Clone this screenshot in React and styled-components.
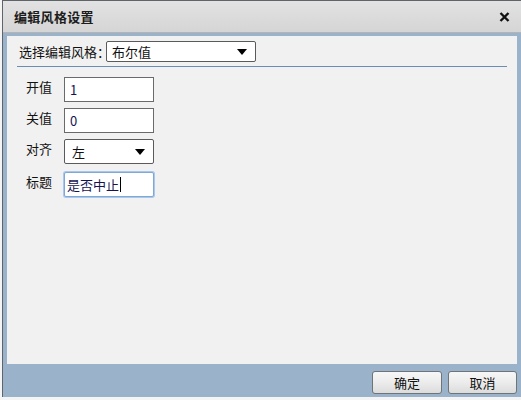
import React from "react";
import styled, { createGlobalStyle } from "styled-components";

const Global = createGlobalStyle`
  html, body { margin: 0; padding: 0; background: #f4f4f4; }
  body { font-family: "Noto Sans CJK SC", "Noto Sans", sans-serif; font-size: 12px; color: #111; }
`;

const Dialog = styled.div`
  margin-left: 2px;
  width: 519px;
  height: 397px;
  box-sizing: border-box;
  border-left: 1px solid #5f6468;
  border-top: 1px solid #5f6468;
  background: #9ab3cb;
  display: flex;
  flex-direction: column;
`;

const TitleBar = styled.div`
  height: 31px;
  border-bottom: 1px solid #b4b4b4;
  background: linear-gradient(#e2e2e2, #d5d5d5);
  display: flex;
  align-items: center;
  justify-content: space-between;
  padding: 0 11px 0 11px;
`;

const Title = styled.div`
  font-weight: bold;
  font-size: 13px;
  color: #1c1c1c;
  letter-spacing: 0.3px;
`;

const Close = styled.div`
  width: 12px;
  height: 12px;
  display: flex;
  align-items: center;
  justify-content: center;
`;

const Panel = styled.div`
  margin: 3px 4px 0 4px;
  height: 328px;
  background: #f1f1f1;
  padding: 5px 10px 0 10px;
  box-sizing: border-box;
`;

const TopRow = styled.div`
  display: flex;
  align-items: center;
  height: 21px;
  padding-left: 2px;
`;

const TopLabel = styled.span`
  width: 87px;
  font-size: 13px;
  white-space: nowrap;
`;

const SelectBox = styled.div`
  width: ${p => p.w}px;
  height: ${p => p.h}px;
  box-sizing: border-box;
  border: 1px solid #5a5a5a;
  border-radius: 2px;
  background: #fff;
  display: flex;
  align-items: center;
  justify-content: space-between;
  padding: 0 8px 0 ${p => p.pl}px;
  font-size: 13px;
`;

const Arrow = styled.span`
  width: 0;
  height: 0;
  border-left: 5px solid transparent;
  border-right: 5px solid transparent;
  border-top: 6px solid #000;
`;

const Separator = styled.div`
  height: 1px;
  background: #6c8cb4;
  margin-top: 4px;
`;

const Fields = styled.div`
  display: flex;
  flex-direction: column;
  gap: 6px;
  padding: 10px 0 0 9px;
`;

const Row = styled.div`
  display: flex;
  align-items: flex-start;
  height: 25px;
  margin-top: ${p => p.mt || 0}px;
`;

const Label = styled.span`
  width: 38px;
  font-size: 13px;
  line-height: 19px;
`;

const Input = styled.div`
  width: 90px;
  height: 25px;
  box-sizing: border-box;
  border: 1px solid ${p => (p.focus ? "#7fa8d8" : "#6a6a6a")};
  box-shadow: ${p => (p.focus ? "0 0 0 1px #a9c8ec" : "none")};
  border-radius: ${p => (p.focus ? "2px" : "0")};
  background: #fff;
  display: flex;
  align-items: center;
  padding-left: ${p => (p.focus ? 2 : 5)}px;
  font-size: 13px;
  color: #141450;
`;

const Caret = styled.span`
  display: inline-block;
  width: 1px;
  height: 15px;
  background: #000;
  margin-left: 1px;
`;

const Footer = styled.div`
  flex: 1;
  display: flex;
  justify-content: flex-end;
  align-items: flex-start;
  gap: 6px;
  padding: 7px 4px 0 0;
`;

const Button = styled.div`
  width: ${p => p.w}px;
  height: 23px;
  box-sizing: border-box;
  border: 1px solid #6f7478;
  border-radius: 3px;
  background: linear-gradient(#f7f7f7 0%, #ececec 50%, #dcdcdc 100%);
  display: flex;
  align-items: center;
  justify-content: center;
  font-size: 13px;
  color: #111;
`;

export default function App() {
  return (
    <>
      <Global />
      <Dialog>
        <TitleBar>
          <Title>编辑风格设置</Title>
          <Close>
            <svg width="11" height="10" viewBox="0 0 11 10">
              <path d="M1.5 1 L9.5 9 M9.5 1 L1.5 9" stroke="#111" strokeWidth="2.4" />
            </svg>
          </Close>
        </TitleBar>
        <Panel>
          <TopRow>
            <TopLabel>选择编辑风格：</TopLabel>
            <SelectBox w={150} h={21} pl={5}>
              <span>布尔值</span>
              <Arrow />
            </SelectBox>
          </TopRow>
          <Separator />
          <Fields>
            <Row>
              <Label>开值</Label>
              <Input>1</Input>
            </Row>
            <Row>
              <Label>关值</Label>
              <Input>0</Input>
            </Row>
            <Row>
              <Label>对齐</Label>
              <SelectBox w={90} h={25} pl={7}>
                <span>左</span>
                <Arrow />
              </SelectBox>
            </Row>
            <Row mt={2}>
              <Label>标题</Label>
              <Input focus>
                是否中止<Caret />
              </Input>
            </Row>
          </Fields>
        </Panel>
        <Footer>
          <Button w={70}>确定</Button>
          <Button w={69}>取消</Button>
        </Footer>
      </Dialog>
    </>
  );
}
